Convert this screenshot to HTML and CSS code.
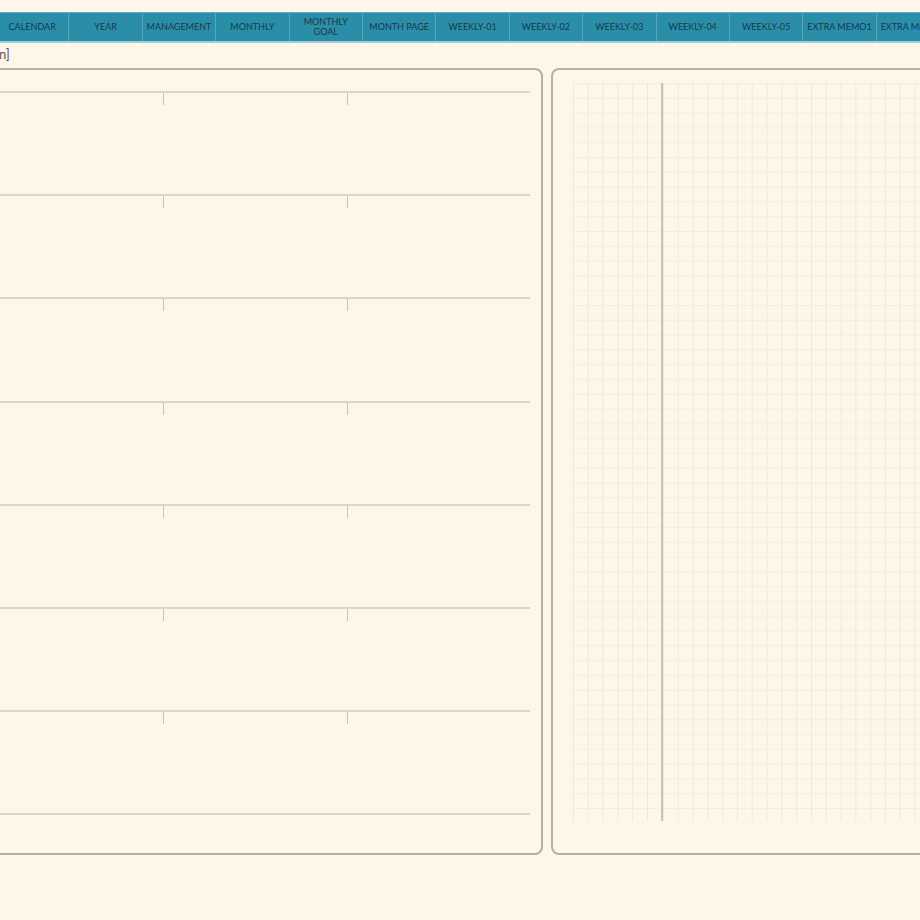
FILE: index.html
```html
<!DOCTYPE html>
<html lang="en">
<head>
    <meta charset="UTF-8">
    <meta name="viewport" content="width=device-width, initial-scale=1.0">
    <title>Weekly Planner</title>
    <link rel="stylesheet" href="styles.css">
</head>
<body>
    <div class="page">
        <!-- Top tab bar -->
        <div class="tabs">
            <div class="tab">CALENDAR</div>
            <div class="tab">YEAR</div>
            <div class="tab">MANAGEMENT</div>
            <div class="tab">MONTHLY</div>
            <div class="tab">MONTHLY<br>GOAL</div>
            <div class="tab">MONTH PAGE</div>
            <div class="tab">WEEKLY-01</div>
            <div class="tab">WEEKLY-02</div>
            <div class="tab">WEEKLY-03</div>
            <div class="tab">WEEKLY-04</div>
            <div class="tab">WEEKLY-05</div>
            <div class="tab">EXTRA MEMO1</div>
            <div class="tab">EXTRA MEMO2</div>
        </div>

        <div class="caption">n]</div>

        <div class="spread">
            <!-- Left page: day rows -->
            <div class="panel panel-left">
                <div class="row"><span class="cell"></span><span class="cell tick"></span><span class="cell tick"></span></div>
                <div class="row"><span class="cell"></span><span class="cell tick"></span><span class="cell tick"></span></div>
                <div class="row"><span class="cell"></span><span class="cell tick"></span><span class="cell tick"></span></div>
                <div class="row"><span class="cell"></span><span class="cell tick"></span><span class="cell tick"></span></div>
                <div class="row"><span class="cell"></span><span class="cell tick"></span><span class="cell tick"></span></div>
                <div class="row"><span class="cell"></span><span class="cell tick"></span><span class="cell tick"></span></div>
                <div class="row"><span class="cell"></span><span class="cell tick"></span><span class="cell tick"></span></div>
                <div class="row-end"></div>
            </div>

            <!-- Right page: grid notes -->
            <div class="panel panel-right">
                <div class="grid">
                    <div class="grid-margin"></div>
                    <div class="grid-body"></div>
                </div>
            </div>
        </div>
    </div>
</body>
</html>
```

FILE: styles.css
```css
body {
    margin: 0;
    padding: 0;
    background-color: #fdf6e9;
    font-family: 'Lato', 'Liberation Sans', sans-serif;
    overflow: hidden;
}
.page {
    width: 920px;
    height: 920px;
    padding-top: 12px;
    box-sizing: border-box;
}
.tabs {
    display: flex;
    margin-left: -4px;
    width: 1000px;
    height: 31px;
    background-color: #2b8ea9;
    border-top: 1px solid #5fb0c6;
    border-bottom: 2px solid #9ccfdb;
    box-sizing: border-box;
}
.tab {
    flex: 0 0 73.4px;
    display: flex;
    align-items: center;
    justify-content: center;
    text-align: center;
    font-size: 9px;
    line-height: 10px;
    color: #123a4c;
    border-right: 1px solid #55a8bf;
    box-sizing: border-box;
    white-space: nowrap;
    overflow: hidden;
}
.caption {
    height: 25px;
    font-size: 13px;
    line-height: 22px;
    color: #5a5a55;
    margin-left: -1px;
}
.spread {
    display: flex;
    gap: 8px;
    margin-left: -20px;
}
.panel {
    height: 787px;
    border: 2px solid #b7b09b;
    border-radius: 8px;
    box-sizing: border-box;
}
.panel-left {
    flex: 0 0 563px;
    padding: 21px 11px 0 0;
}
.row {
    display: flex;
    height: 103.2px;
    border-top: 2px solid #ddd6c4;
    box-sizing: border-box;
}
.cell {
    display: block;
}
.cell:nth-child(1) {
    width: 181px;
}
.cell:nth-child(2) {
    width: 184px;
}
.cell:nth-child(3) {
    flex: 1;
}
.tick::before {
    content: "";
    display: block;
    width: 0;
    height: 12px;
    border-left: 1.5px solid #cbc4b2;
}
.row-end {
    border-top: 2px solid #ddd6c4;
}
.panel-right {
    flex: 0 0 560px;
    padding: 13px 0 0 20px;
}
.grid {
    display: flex;
    height: 738px;
}
.grid-margin,
.grid-body {
    background-image:
        linear-gradient(to right, #f1e9d8 1px, transparent 1px),
        linear-gradient(to bottom, #f5eee0 1px, transparent 1px);
    background-size: 14.8px 14.8px;
}
.grid-margin {
    width: 88px;
    border-right: 2px solid #c9c2b0;
}
.grid-body {
    flex: 1;
}
```
